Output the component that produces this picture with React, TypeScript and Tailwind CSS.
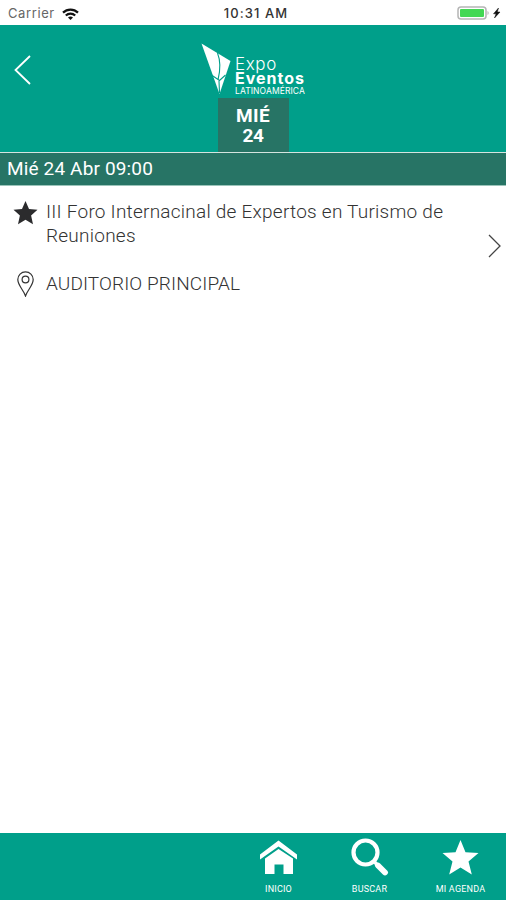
import type { ReactNode } from "react";

type Session = {
  title: string;
  room: string;
};

const sessions: Session[] = [
  {
    title: "III Foro Internacinal de Expertos en Turismo de Reuniones",
    room: "AUDITORIO PRINCIPAL",
  },
];

const STAR = "M12 0l3.5 8 8.5.8-6.4 5.8 1.9 8.6-7.5-4.5-7.5 4.5 1.9-8.6L0 8.8 8.5 8z";

function StatusBar() {
  return (
    <div className="grid h-[25px] shrink-0 grid-cols-3 items-center bg-white pt-[2px] font-['Inter','Liberation_Sans',sans-serif] text-[13px] leading-none">
      <div className="flex items-center pl-2">
        <span className="tracking-[0.6px] text-[#666]">Carrier</span>
        <svg width="17" height="12" viewBox="0 0 17 12" className="ml-[7px]" fill="none" stroke="#111" strokeWidth="2.2">
          <path d="M1 4.6c4.2-4.1 10.8-4.1 15 0" />
          <path d="M3.8 7.5c2.7-2.6 6.7-2.6 9.4 0" />
          <path d="M6 9.4c1.4-1.3 3.6-1.3 5 0L8.5 12z" fill="#111" stroke="none" />
        </svg>
      </div>
      <div className="pl-[6px] text-center font-medium tracking-[1.1px] whitespace-nowrap text-[#333]">10:31 AM</div>
      <div className="flex items-center justify-end pr-[5px] pb-[2px]">
        <svg width="44" height="14" viewBox="0 0 44 14">
          <rect x="1" y="1" width="28" height="12" rx="3" fill="#fff" stroke="#b5b5b5" strokeWidth="1.5" />
          <rect x="3" y="3" width="24" height="8" rx="1" fill="#43d854" />
          <path d="M30.5 5c1.6.5 1.6 3.5 0 4z" fill="#b5b5b5" />
          <path d="M41.5 2l-5 5.8h2.6L37.5 12l5.5-6h-2.7z" fill="#111" stroke="#111" strokeWidth=".5" />
        </svg>
      </div>
    </div>
  );
}

function Logo() {
  return (
    <div className="flex h-[54px] w-[104px] items-start">
      <svg width="30" height="53" viewBox="0 0 30 53" className="shrink-0">
        <path d="M.5.5L29.5 18 18.5 51z" fill="#fff" />
        <path d="M16.5 10c3.2 8 3 17 .5 27M10.5 32l8 5.5 6-5.5M18 38l.5 12" fill="none" stroke="#009f8a" strokeWidth="1.1" />
      </svg>
      <div className="flex flex-col pt-[14px] pl-[4px] font-['Inter',sans-serif] whitespace-nowrap text-white">
        <span className="text-[17px] leading-[14px] font-light tracking-[0.6px]">Expo</span>
        <span className="text-[16px] leading-[14px] font-bold tracking-[1px]">Eventos</span>
        <span className="mt-[2px] text-[8.5px] leading-[9px] tracking-[0.1px]">LATINOAMÉRICA</span>
      </div>
    </div>
  );
}

function Header() {
  return (
    <header className="grid h-[128px] shrink-0 grid-cols-[1fr_104px_1fr] border-b border-[#d5e4df] bg-[#009f8a]">
      <button type="button" aria-label="Volver" className="flex h-[90px] items-center pl-[14px]">
        <svg width="17" height="30" viewBox="0 0 17 30" fill="none" stroke="#fff" strokeWidth="1.8">
          <path d="M16 1L1.5 15 16 29" />
        </svg>
      </button>
      <div className="flex flex-col items-center pt-[18px]">
        <Logo />
        <div className="mt-px flex h-[54px] w-[71px] flex-col items-center bg-[#277465] pt-[8px] text-[19px] leading-[20px] font-bold text-white">
          <span className="tracking-[0.3px]">MIÉ</span>
          <span className="tracking-[-0.3px]">24</span>
        </div>
      </div>
    </header>
  );
}

function SessionRow({ session }: { session: Session }) {
  return (
    <div className="flex pt-[13px] pl-[13px] text-[19px] leading-6 font-light text-[#333]">
      <div className="flex w-[422px] flex-col gap-6">
        <div className="flex items-start">
          <svg width="25" height="24" viewBox="0 0 24 24" fill="#2b2b2d" className="mt-[2px] mr-2 shrink-0">
            <path d={STAR} />
          </svg>
          <span className="w-[415px] shrink-0 pt-px tracking-[0.24px]">{session.title}</span>
        </div>
        <div className="-mt-px flex items-start">
          <svg width="25" height="26" viewBox="0 0 25 26" fill="none" stroke="#333" strokeWidth="1.2" className="mr-2 shrink-0">
            <path d="M12.5 25C10.6 19 4.8 14.5 4.8 8.6a7.7 7.7 0 0 1 15.4 0c0 5.9-5.8 10.4-7.7 16.4z" />
            <circle cx="12.5" cy="8.5" r="3.4" />
          </svg>
          <span className="pt-px tracking-[0.1px]">{session.room}</span>
        </div>
      </div>
      <svg width="14" height="24" viewBox="0 0 14 24" fill="none" stroke="#444" strokeWidth="1.3" className="mt-[35px] ml-[53px] shrink-0">
        <path d="M1 1l11 11L1 23" />
      </svg>
    </div>
  );
}

function Tab({ label, children }: { label: string; children: ReactNode }) {
  return (
    <button type="button" className="flex w-[91px] flex-col items-center pt-[5px] text-white">
      <svg width="38" height="38" viewBox="0 0 38 38" fill="#fff">
        {children}
      </svg>
      <span className="mt-[8px] text-[9px] leading-[10px] tracking-[0.2px] whitespace-nowrap">{label}</span>
    </button>
  );
}

function TabBar() {
  return (
    <nav className="flex h-[67px] shrink-0 justify-end bg-[#009f8a]">
      <Tab label="INICIO">
        <path d="M18.5 2.5L0 16.5v5l18.5-13 18.5 13v-5z" />
        <path d="M5 20.5L18.5 11 33 20.5V36h-9.5v-9.5h-9V36H5z" />
      </Tab>
      <Tab label="BUSCAR">
        <circle cx="14.5" cy="14.5" r="12" fill="none" stroke="#fff" strokeWidth="4.2" />
        <path d="M23.5 24l4 4" stroke="#fff" strokeWidth="3.5" />
        <path d="M27 27.5l7 7" stroke="#fff" strokeWidth="5.8" strokeLinecap="round" />
      </Tab>
      <Tab label="MI AGENDA">
        <path d="M18.5 2l5 12.2 13 .9-10 8.5L29.800 36.500l-11.300-7-11.300 7 3.300-12.900L.5 15.100l13-.9z" />
      </Tab>
    </nav>
  );
}

export default function App() {
  return (
    <div className="flex h-[900px] w-[506px] flex-col overflow-hidden bg-white font-['Roboto','Open_Sans',sans-serif]">
      <StatusBar />
      <Header />
      <div className="flex h-[33px] shrink-0 items-center border-b border-[#9bc4ba] bg-[#277465] pl-[7px] text-[19px] tracking-[0.15px] text-white">
        Mié 24 Abr 09:00
      </div>
      <main className="flex-1">
        {sessions.map((session) => (
          <SessionRow key={session.title} session={session} />
        ))}
      </main>
      <TabBar />
    </div>
  );
}
